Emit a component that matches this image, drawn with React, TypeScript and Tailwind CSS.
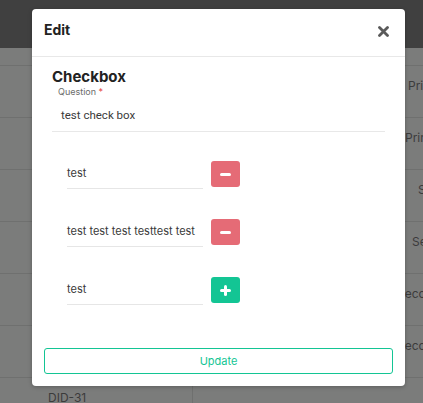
import React from "react";

const rows = [
  { right: "Primary", pad: "pl-[215px]" },
  { right: "Primary", pad: "pl-[212px]" },
  { right: "Single", pad: "pl-[225px]" },
  { right: "Select", pad: "pl-[219px]" },
  { right: "Secondary", pad: "pl-[204px]" },
  { right: "Secondary", pad: "pl-[204px]" },
];

function MinusButton() {
  return (
    <button className="flex h-[26px] w-[29px] shrink-0 items-center justify-center rounded-[3px] bg-[#e56b76]">
      <span className="block h-[3px] w-[11px] rounded-sm bg-white" />
    </button>
  );
}

function PlusButton() {
  return (
    <button className="relative flex h-[26px] w-[29px] shrink-0 items-center justify-center rounded-[3px] bg-[#13c594]">
      <span className="absolute block h-[3px] w-[11px] rounded-sm bg-white" />
      <span className="absolute block h-[11px] w-[3px] rounded-sm bg-white" />
    </button>
  );
}

function OptionRow({ value, add }: { value: string; add?: boolean }) {
  return (
    <div className="flex items-start gap-[8px]">
      <div className="h-[28px] w-[136px] border-b border-[#e6e6e6] pt-[5px] text-[11px] leading-[14px] whitespace-nowrap text-[#3a3a3a]">
        {value}
      </div>
      {add ? <PlusButton /> : <MinusButton />}
    </div>
  );
}

export default function App() {
  return (
    <div
      className="relative h-[403px] w-[423px] overflow-hidden bg-[#7b7c7b]"
      style={{ fontFamily: "Inter, 'Noto Sans', sans-serif" }}
    >
      {/* page behind the overlay */}
      <div className="h-[48px] bg-[#404040]" />
      <div className="h-[18px] border-b border-[#6f706f]" />
      {rows.map((r, i) => (
        <div key={i} className="flex h-[52px] items-start border-b border-[#6f706f]">
          <div className="w-[193px] shrink-0" />
          <div className={`${r.pad} shrink-0 pt-[12px] text-[12px] leading-[16px] whitespace-nowrap text-[#3b3b3b]`}>
            {r.right}
          </div>
        </div>
      ))}
      <div className="flex h-[40px]">
        <div className="w-[193px] shrink-0 border-r border-[#6f706f] pt-[12px] pl-[48px] text-[12px] leading-[16px] text-[#3b3b3b]">
          DID-31
        </div>
      </div>

      {/* modal */}
      <div className="absolute top-[9px] left-[32px] flex h-[377px] w-[373px] flex-col rounded-[4px] bg-white shadow-[0_1px_4px_rgba(0,0,0,0.25)]">
        <div className="flex h-[48px] items-center justify-between border-b border-[#e8e8e8] pr-[16px] pb-[6px] pl-[12px]">
          <span className="text-[14px] font-bold text-[#222]">Edit</span>
          <svg width="11" height="11" viewBox="0 0 11 11" className="mt-[4px]">
            <path d="M1.5 1.5 L9.5 9.5 M9.5 1.5 L1.5 9.5" stroke="#5a5a5a" strokeWidth="2.8" strokeLinecap="round" />
          </svg>
        </div>
        <div className="flex flex-1 flex-col px-[20px] pt-[11px]">
          <div className="text-[15px] leading-[18px] font-bold text-[#222]">Checkbox</div>
          <div className="pl-[6px] text-[9px] leading-[11px] text-[#6b6b6b]">
            Question <span className="text-[#e53e3e]">*</span>
          </div>
          <div
            className="mt-[7px] border-b border-[#e8e8e8] pt-[3px] pb-[7px] pl-[9px] text-[11.5px] text-[#3a3a3a]"
            style={{ fontFamily: "Roboto, 'Liberation Sans', sans-serif" }}
          >
            test check box
          </div>
          <div className="mt-[29px] flex flex-col gap-[30px] pl-[15px]">
            <OptionRow value="test" />
            <OptionRow value="test test test testtest test" />
            <OptionRow value="test" add />
          </div>
          <div className="mt-auto mb-[12px] -mx-[8px] flex h-[26px] items-center justify-center rounded-[3px] border border-[#13c594] text-[11px] text-[#13c594]">
            Update
          </div>
        </div>
      </div>
    </div>
  );
}
